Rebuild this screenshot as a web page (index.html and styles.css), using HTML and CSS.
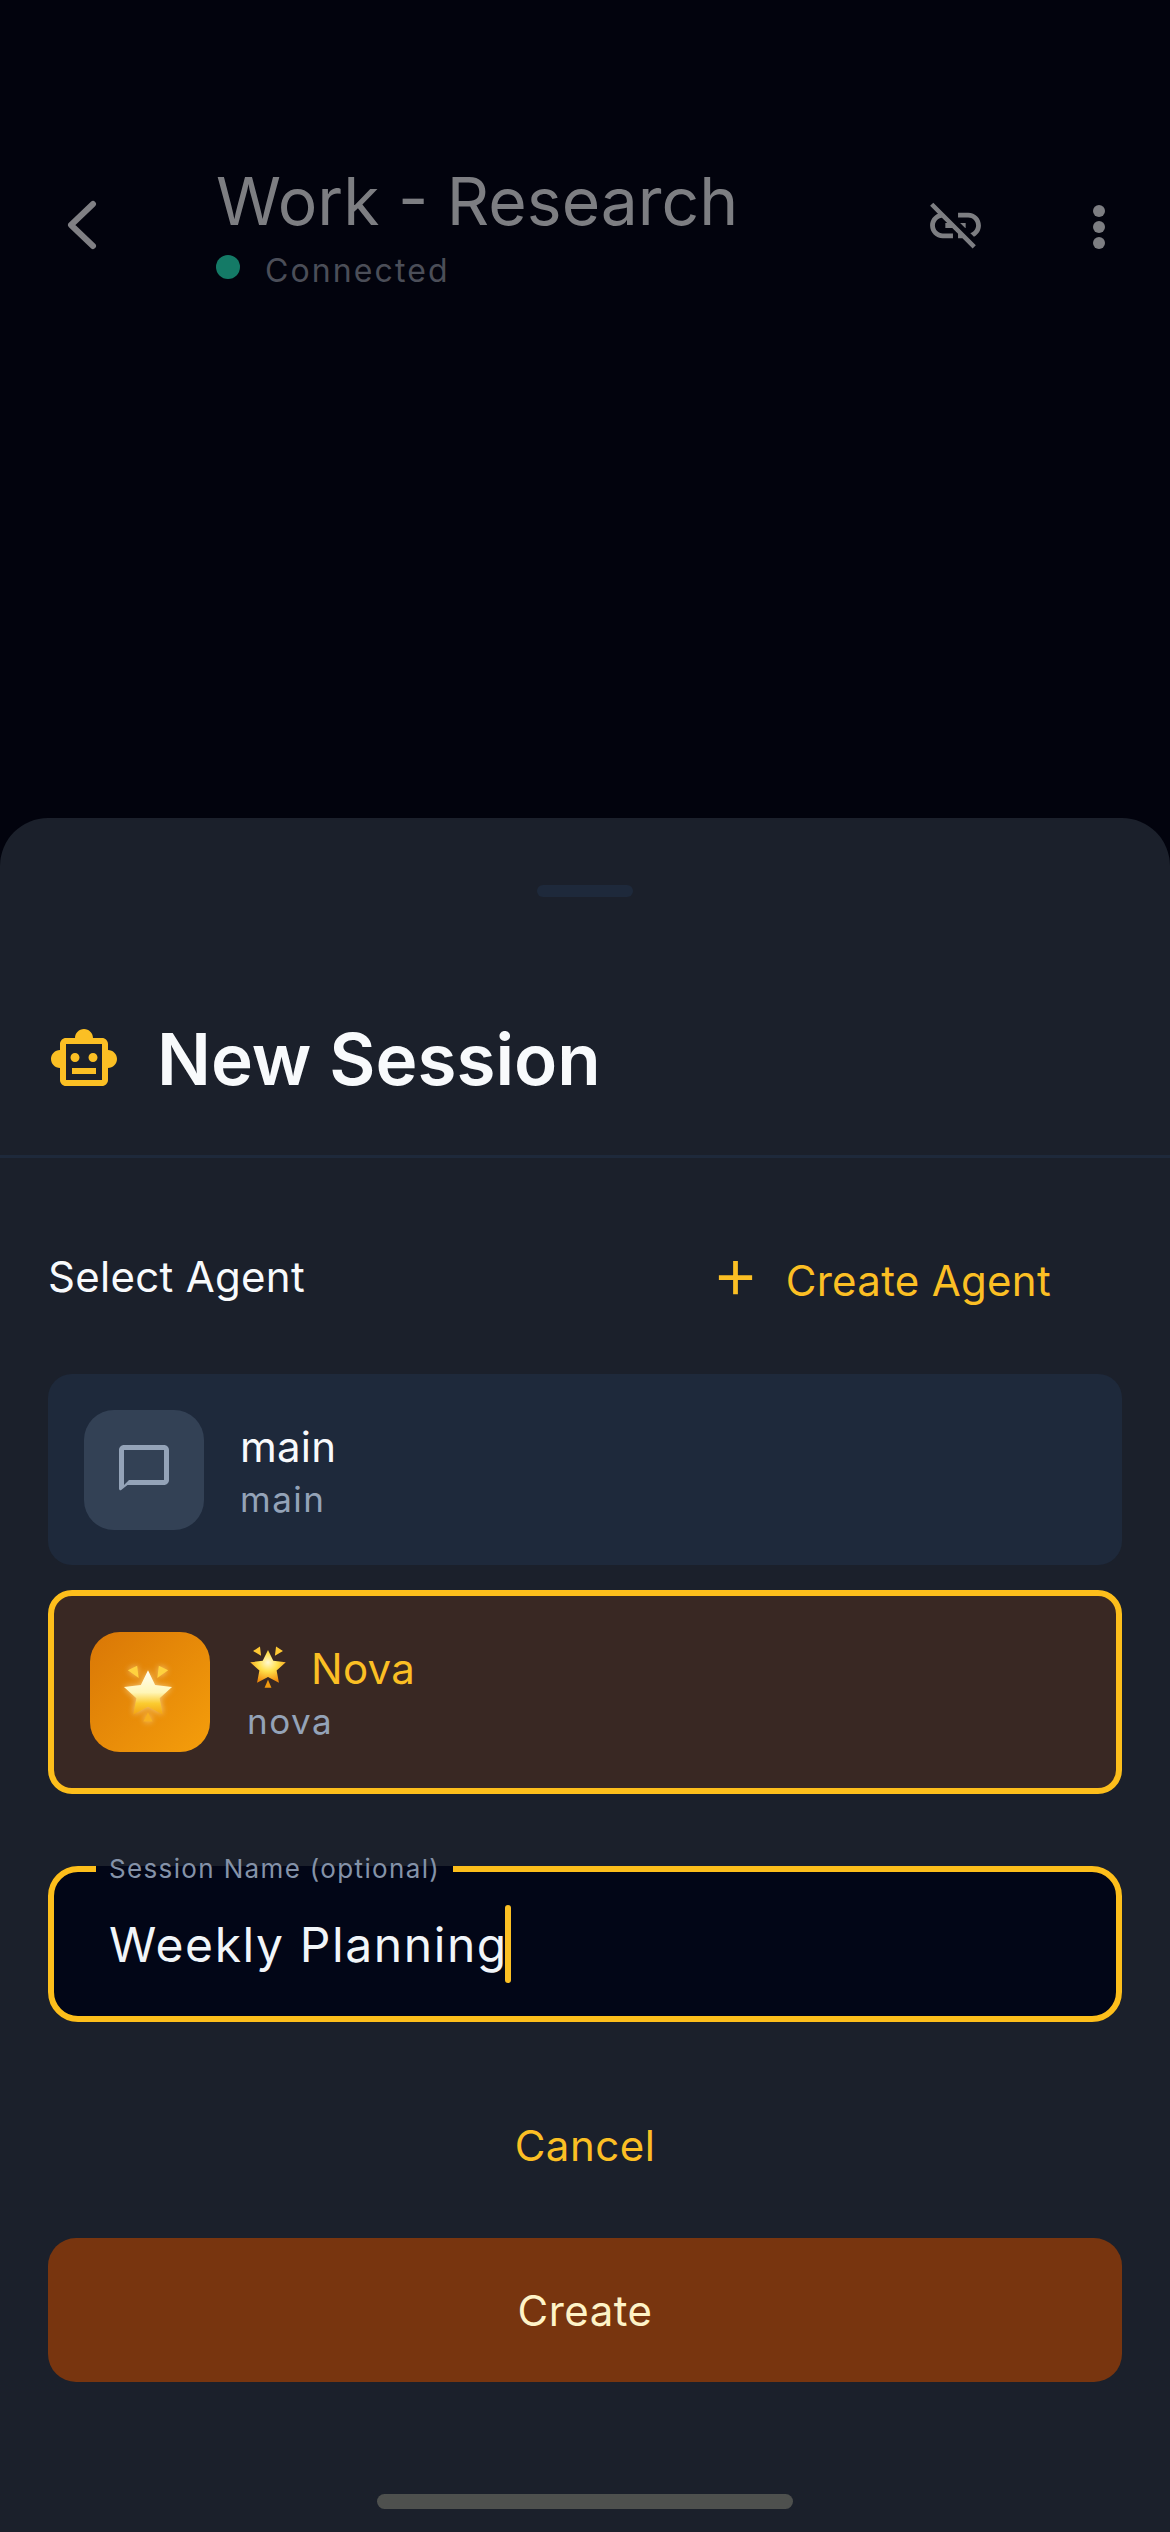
FILE: index.html

```html
<!DOCTYPE html>
<html lang="en">
<head>
  <meta charset="UTF-8">
  <title>New Session</title>
  <link rel="stylesheet" href="styles.css">
</head>
<body>

  <svg class="defs" width="0" height="0">
    <defs>
      <radialGradient id="starFill" cx="50%" cy="38%" r="62%">
        <stop offset="0" stop-color="#fff8d0"/>
        <stop offset="0.45" stop-color="#ffdf4a"/>
        <stop offset="1" stop-color="#f08a0c"/>
      </radialGradient>
      <linearGradient id="starGlow" x1="0" y1="0" x2="0" y2="1">
        <stop offset="0" stop-color="#fffef4"/>
        <stop offset="0.5" stop-color="#fff6b8"/>
        <stop offset="0.75" stop-color="#fbcb30"/>
        <stop offset="1" stop-color="#f3a312"/>
      </linearGradient>
    </defs>
  </svg>

  <header class="topbar">
    <svg class="back" viewBox="0 0 30 50"><path d="M26 4 L4 25 L26 46"/></svg>
    <div class="topbar-title">
      <h2>Work - Research</h2>
      <div class="status"><span class="dot"></span>Connected</div>
    </div>
    <svg class="unlink" viewBox="0 0 24 24"><path d="M17 7h-4v1.9h4c1.71 0 3.1 1.39 3.1 3.1 0 1.43-.98 2.63-2.31 2.98l1.46 1.46C20.88 15.61 22 13.95 22 12c0-2.76-2.24-5-5-5zm-1 4h-2.19l2 2H16zM2 4.27l3.11 3.11C3.29 8.12 2 9.91 2 12c0 2.76 2.24 5 5 5h4v-1.9H7c-1.71 0-3.1-1.39-3.1-3.1 0-1.59 1.21-2.9 2.76-3.07L8.73 11H8v2h2.73L13 15.27V17h1.73l4.01 4L20 19.74 3.27 3 2 4.27z"/></svg>
    <div class="more"><span></span><span></span><span></span></div>
  </header>

  <section class="sheet">
    <div class="handle"></div>

    <div class="sheet-head">
      <svg class="robot" viewBox="0 0 24 24"><path d="M20 9V7c0-1.1-.9-2-2-2h-3c0-1.66-1.34-3-3-3S9 3.34 9 5H6C4.9 5 4 5.9 4 7v2c-1.66 0-3 1.34-3 3s1.34 3 3 3v4c0 1.1.9 2 2 2h12c1.1 0 2-.9 2-2v-4c1.66 0 3-1.34 3-3s-1.34-3-3-3zM18 19H6V7h12v12zM9 13c-.83 0-1.5-.67-1.5-1.5S8.17 10 9 10s1.5.67 1.5 1.5S9.83 13 9 13zm7.5-1.500c0 .83-.67 1.5-1.5 1.5s-1.5-.67-1.500-1.5S14.170 10 15 10s1.500.67 1.500 1.500zM8 15h8v2H8v-2z"/></svg>
      <h1>New Session</h1>
    </div>

    <div class="sheet-body">
      <div class="agents-head">
        <span class="agents-label">Select Agent</span>
        <button class="create-agent">
          <svg viewBox="0 0 24 24"><path d="M19 13h-6v6h-2v-6H5v-2h6V5h2v6h6v2z"/></svg>
          Create Agent
        </button>
      </div>

      <div class="agent">
        <div class="agent-icon">
          <svg class="chat" viewBox="0 0 24 24"><path d="M20 2H4c-1.1 0-2 .9-2 2v15.400c0 .7.6.9 1 .5L5.400 18H20c1.100 0 2-.9 2-2V4c0-1.100-.9-2-2-2zm0 14H6l-2 2V4h16v12z"/></svg>
        </div>
        <div class="agent-text">
          <div class="agent-name">main</div>
          <div class="agent-id">main</div>
        </div>
      </div>

      <div class="agent selected">
        <div class="agent-icon">
          <svg class="star-big" viewBox="0 0 40 40">
            <path fill="url(#starGlow)" d="M20 6 L24.600 15.500 L35.500 16.800 L27.500 24 L29.500 34.500 L20 29.500 L10.500 34.500 L12.500 24 L4.500 16.800 L15.400 15.500 Z"/>
            <path fill="#ffd23e" d="M7 6 L13 3 L14 11 Z M33 6 L27 3 L26 11 Z"/>
            <path fill="#f8b020" d="M20 33 L23 39 L17 39 Z"/>
          </svg>
        </div>
        <div class="agent-text">
          <div class="agent-name">
            <svg class="star-small" viewBox="0 0 40 40">
              <path fill="url(#starFill)" d="M20 6 L24.600 15.500 L35.500 16.800 L27.500 24 L29.500 34.500 L20 29.500 L10.500 34.500 L12.500 24 L4.500 16.800 L15.400 15.500 Z"/>
              <path fill="#ffc933" d="M7 7 L13 3 L14 11 Z M33 7 L27 3 L26 11 Z"/>
              <path fill="#f09a10" d="M20 32 L23 39 L17 39 Z"/>
            </svg>
            Nova
          </div>
          <div class="agent-id">nova</div>
        </div>
      </div>

      <fieldset class="name-field">
        <legend>Session Name (optional)</legend>
        <div class="name-value">Weekly Planning<span class="caret"></span></div>
      </fieldset>

      <button class="cancel">Cancel</button>
      <button class="create">Create</button>
    </div>

    <div class="home-bar"></div>
  </section>

</body>
</html>
```

FILE: styles.css

```css
* { box-sizing: border-box; }

html, body { margin: 0; }

body {
  width: 1170px;
  height: 2532px;
  overflow: hidden;
  display: flex;
  flex-direction: column;
  background: #02030d;
  font-family: Inter, "Noto Sans", sans-serif;
}

button {
  font-family: inherit;
  background: none;
  border: none;
  padding: 0;
}

.defs { position: absolute; }

/* dimmed page behind the sheet */
.topbar {
  height: 818px;
  flex: none;
  display: flex;
  align-items: flex-start;
  padding: 161px 0 0 67px;
}

.back {
  width: 30px;
  height: 50px;
  margin-top: 39px;
  fill: none;
  stroke: #808084;
  stroke-width: 6;
  stroke-linecap: round;
  stroke-linejoin: round;
}

.topbar-title { margin-left: 119px; width: 709px; }

.topbar-title h2 {
  margin: 0;
  font-size: 66px;
  line-height: 80px;
  font-weight: 400;
  color: #7d7e82;
}

.status {
  display: flex;
  align-items: center;
  margin-top: 10px;
  font-size: 32px;
  line-height: 40px;
  letter-spacing: 2.1px;
  color: #4b4e58;
}

.dot {
  width: 24px;
  height: 24px;
  border-radius: 50%;
  background: #147a66;
  margin-right: 25px;
  margin-top: -8px;
}

.unlink {
  width: 61px;
  height: 61px;
  margin-top: 34px;
  fill: #7d7e82;
  flex: none;
}

.more {
  display: flex;
  flex-direction: column;
  gap: 4px;
  margin: 44px 0 0 107px;
}

.more span {
  width: 12px;
  height: 12px;
  border-radius: 50%;
  background: #7d7e82;
}

/* bottom sheet */
.sheet {
  flex: 1;
  display: flex;
  flex-direction: column;
  background: #1b202b;
  border-radius: 48px 48px 0 0;
}

.handle {
  width: 96px;
  height: 12px;
  border-radius: 6px;
  background: #1e293b;
  margin: 67px auto 0;
}

.sheet-head {
  height: 261px;
  display: flex;
  align-items: flex-start;
  padding: 126px 0 0 48px;
  border-bottom: 3px solid #1e293b;
}

.robot { width: 72px; height: 72px; fill: #fbbf24; flex: none; }

.sheet-head h1 {
  margin: -7px 0 0 37px;
  font-size: 71px;
  line-height: 87px;
  font-weight: 600;
  color: #f8fafc;
}

.sheet-body { padding: 0 48px; }

.agents-head {
  display: flex;
  justify-content: space-between;
  align-items: flex-start;
  height: 216px;
  padding-top: 93px;
}

.agents-label {
  font-size: 42px;
  line-height: 52px;
  letter-spacing: 0.3px;
  color: #f8fafc;
}

.create-agent {
  display: flex;
  align-items: center;
  font-size: 42px;
  line-height: 52px;
  letter-spacing: 0.3px;
  color: #fbbf24;
  margin: 4px 71px 0 0;
}

.create-agent svg {
  width: 57px;
  height: 57px;
  fill: #fbbf24;
  margin-right: 22px;
  margin-top: -8px;
}

.agent {
  display: flex;
  align-items: center;
  height: 191px;
  padding-left: 36px;
  margin-bottom: 25px;
  border-radius: 24px;
  background: #1e293b;
}

.agent.selected {
  height: 204px;
  margin-bottom: 72px;
  background: #392823;
  border: 6px solid #fdbe1b;
}

.agent-icon {
  width: 120px;
  height: 120px;
  flex: none;
  display: flex;
  align-items: center;
  justify-content: center;
  border-radius: 30px;
  background: #334155;
}

.selected .agent-icon { background: linear-gradient(135deg, #d97706, #f59e0b); }

.chat { width: 60px; height: 60px; fill: #94a3b8; }

.star-big {
  width: 62px;
  height: 62px;
  margin-right: 5px;
  filter: drop-shadow(0 0 3px rgba(255, 250, 210, 0.6));
}

.agent-text { margin: 4px 0 0 36px; }

.selected .agent-text { margin-left: 37px; }

.agent-name {
  display: flex;
  align-items: center;
  font-size: 42px;
  line-height: 54px;
  letter-spacing: 0.2px;
  color: #f8fafc;
}

.selected .agent-name { color: #fbbf24; letter-spacing: 0.3px; }

.star-small { width: 46px; height: 46px; margin-right: 20px; margin-top: -6px; margin-left: -2px; }

.agent-id {
  font-size: 35px;
  line-height: 50px;
  letter-spacing: 1.5px;
  color: #94a3b8;
}

/* the legend notches the border for us */
.name-field {
  margin: -12px 0 0;
  padding: 0 55px;
  height: 168px;
  border: 6px solid #fdbe1b;
  border-radius: 30px;
  background: #020617;
  min-width: 0;
}

.name-field legend {
  padding: 0 13px;
  margin-left: -13px;
  font-size: 26px;
  line-height: 30px;
  letter-spacing: 1.35px;
  color: #8492a8;
}

.name-value {
  display: flex;
  align-items: center;
  margin-top: 21px;
  height: 78px;
  font-size: 48px;
  letter-spacing: 1.6px;
  color: #f1f5f9;
}

.caret {
  width: 6px;
  height: 78px;
  border-radius: 3px;
  background: #fbbf24;
  margin-left: -3px;
}

.cancel {
  display: block;
  width: 100%;
  height: 216px;
  padding-top: 30px;
  font-size: 42px;
  letter-spacing: 0.5px;
  color: #fbbf24;
}

.create {
  display: block;
  width: 100%;
  height: 144px;
  border-radius: 28px;
  background: #78350f;
  font-size: 42px;
  letter-spacing: 0.5px;
  color: #fef3c7;
}

.home-bar {
  width: 416px;
  height: 15px;
  border-radius: 8px;
  background: #4e504e;
  margin: 112px auto 0;
}
```
